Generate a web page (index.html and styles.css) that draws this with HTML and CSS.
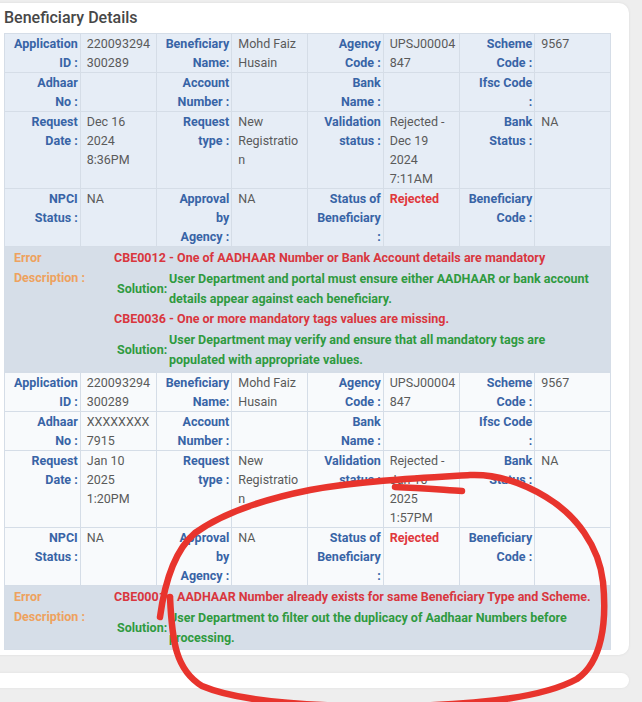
FILE: index.html
```html
<!DOCTYPE html>
<html lang="en">
<head>
<meta charset="utf-8">
<title>Beneficiary Details</title>
<link rel="stylesheet" href="styles.css">
</head>
<body>
<div class="card">
  <h2 class="title">Beneficiary Details</h2>
  <table class="ben ben-hl">
    <tr>
      <td class="l">Application<br>ID :</td><td class="v">220093294<br>300289</td>
      <td class="l">Beneficiary<br>Name:</td><td class="v">Mohd Faiz<br>Husain</td>
      <td class="l">Agency<br>Code :</td><td class="v">UPSJ00004<br>847</td>
      <td class="l">Scheme<br>Code :</td><td class="v">9567</td>
    </tr>
    <tr>
      <td class="l">Adhaar<br>No :</td><td class="v"></td>
      <td class="l">Account<br>Number :</td><td class="v"></td>
      <td class="l">Bank<br>Name :</td><td class="v"></td>
      <td class="l">Ifsc Code<br>:</td><td class="v"></td>
    </tr>
    <tr>
      <td class="l">Request<br>Date :</td><td class="v">Dec 16<br>2024<br>8:36PM</td>
      <td class="l">Request<br>type :</td><td class="v">New<br>Registratio<br>n</td>
      <td class="l">Validation<br>status :</td><td class="v">Rejected -<br>Dec 19<br>2024<br>7:11AM</td>
      <td class="l">Bank<br>Status :</td><td class="v">NA</td>
    </tr>
    <tr>
      <td class="l">NPCI<br>Status :</td><td class="v">NA</td>
      <td class="l">Approval<br>by<br>Agency :</td><td class="v">NA</td>
      <td class="l">Status of<br>Beneficiary<br>:</td><td class="v bad">Rejected</td>
      <td class="l">Beneficiary<br>Code :</td><td class="v"></td>
    </tr>
    <tr class="err">
      <td colspan="8">
        <div class="err-row">
          <div class="err-label">Error<br>Description :</div>
          <div class="err-body">
            <div class="code">CBE0012 - One of AADHAAR Number or Bank Account details are mandatory</div>
            <div class="sol"><span class="sol-l">Solution:</span><span class="sol-t">User Department and portal must ensure either AADHAAR or bank account<br>details appear against each beneficiary.</span></div>
            <div class="code">CBE0036 - One or more mandatory tags values are missing.</div>
            <div class="sol"><span class="sol-l">Solution:</span><span class="sol-t">User Department may verify and ensure that all mandatory tags are<br>populated with appropriate values.</span></div>
          </div>
        </div>
      </td>
    </tr>
  </table>
  <table class="ben">
    <tr>
      <td class="l">Application<br>ID :</td><td class="v">220093294<br>300289</td>
      <td class="l">Beneficiary<br>Name:</td><td class="v">Mohd Faiz<br>Husain</td>
      <td class="l">Agency<br>Code :</td><td class="v">UPSJ00004<br>847</td>
      <td class="l">Scheme<br>Code :</td><td class="v">9567</td>
    </tr>
    <tr>
      <td class="l">Adhaar<br>No :</td><td class="v">XXXXXXXX<br>7915</td>
      <td class="l">Account<br>Number :</td><td class="v"></td>
      <td class="l">Bank<br>Name :</td><td class="v"></td>
      <td class="l">Ifsc Code<br>:</td><td class="v"></td>
    </tr>
    <tr>
      <td class="l">Request<br>Date :</td><td class="v">Jan 10<br>2025<br>1:20PM</td>
      <td class="l">Request<br>type :</td><td class="v">New<br>Registratio<br>n</td>
      <td class="l">Validation<br>status :</td><td class="v">Rejected -<br>Jan 10<br>2025<br>1:57PM</td>
      <td class="l">Bank<br>Status :</td><td class="v">NA</td>
    </tr>
    <tr>
      <td class="l">NPCI<br>Status :</td><td class="v">NA</td>
      <td class="l">Approval<br>by<br>Agency :</td><td class="v">NA</td>
      <td class="l">Status of<br>Beneficiary<br>:</td><td class="v bad">Rejected</td>
      <td class="l">Beneficiary<br>Code :</td><td class="v"></td>
    </tr>
    <tr class="err">
      <td colspan="8">
        <div class="err-row">
          <div class="err-label">Error<br>Description :</div>
          <div class="err-body">
            <div class="code">CBE0001 - AADHAAR Number already exists for same Beneficiary Type and Scheme.</div>
            <div class="sol"><span class="sol-l">Solution:</span><span class="sol-t">User Department to filter out the duplicacy of Aadhaar Numbers before<br>processing.</span></div>
          </div>
        </div>
      </td>
    </tr>
  </table>
</div>
<div class="card2"></div>
<svg class="scribble" width="642" height="702" viewBox="0 0 642 702" aria-hidden="true">
  <path d="M170,597 C172,642 176,670 202,686 C242,703 320,707 400,706 C480,705 542,698 577,679 C602,662 607,622 603,582 C599,546 576,515 546,497 C521,482 495,474 470,475 C420,478 360,481 310,490 C260,500 220,515 195,533 C175,550 165,580 160,617"/>
  <path d="M395,487 C420,488 445,490 462,491"/>
</svg>
</body>
</html>
```
FILE: styles.css
```css
html, body {
  margin: 0;
  padding: 0;
}
body {
  background: #eeeeee;
  font-family: Roboto, "Noto Sans", "Liberation Sans", sans-serif;
  height: 702px;
  overflow: hidden;
  position: relative;
}
.card {
  background: #ffffff;
  margin: 3px 13px 0 -14px;
  padding: 5px 18px 5px 18px;
  border-radius: 10px;
  box-shadow: 0 0 3px rgba(0, 0, 0, 0.08);
}
.title {
  margin: 0 0 5px;
  font-size: 16px;
  line-height: 20px;
  font-weight: 500;
  color: #474747;
}
.ben {
  width: 607px;
  table-layout: fixed;
  border-collapse: collapse;
  font-size: 12.5px;
  line-height: 19px;
}
.ben td {
  border: 1px solid #d5dde7;
  vertical-align: top;
  padding: 0 6px;
  background: #f8fafc;
  white-space: nowrap;
  overflow: hidden;
}
.ben-hl td {
  background: #e6edf6;
}
.ben td.l {
  text-align: right;
  color: #3864a6;
  font-weight: 700;
  padding: 0 2px 0 2px;
}
.ben td.v {
  color: #5a5a5a;
}
.ben td.bad {
  color: #e0383c;
  font-weight: 700;
}
.ben .err td {
  background: #d6dee8;
  padding: 0;
}
.err-row {
  display: flex;
  padding: 1px 0 1px;
}
.err-label {
  width: 100px;
  padding-left: 9px;
  color: #eea25e;
  font-weight: 700;
  line-height: 20px;
}
.err-body {
  flex: 1;
  line-height: 20px;
  font-weight: 700;
}
.code {
  color: #d9363e;
}
.sol {
  display: flex;
  align-items: center;
  margin: 1px 0 0;
}
.sol-l {
  width: 52px;
  padding-left: 3px;
  color: #2f9a3f;
}
.sol-t {
  color: #2f9a3f;
}
.card2 {
  margin: 18px 13px 0 -14px;
  height: 15px;
  background: #ffffff;
  border-radius: 8px;
  box-shadow: 0 0 3px rgba(0, 0, 0, 0.06);
}
.scribble {
  position: absolute;
  top: 0;
  left: 0;
  pointer-events: none;
}
.scribble path {
  fill: none;
  stroke: #e8342d;
  stroke-width: 6.5;
  stroke-linecap: round;
  stroke-linejoin: round;
}
```
